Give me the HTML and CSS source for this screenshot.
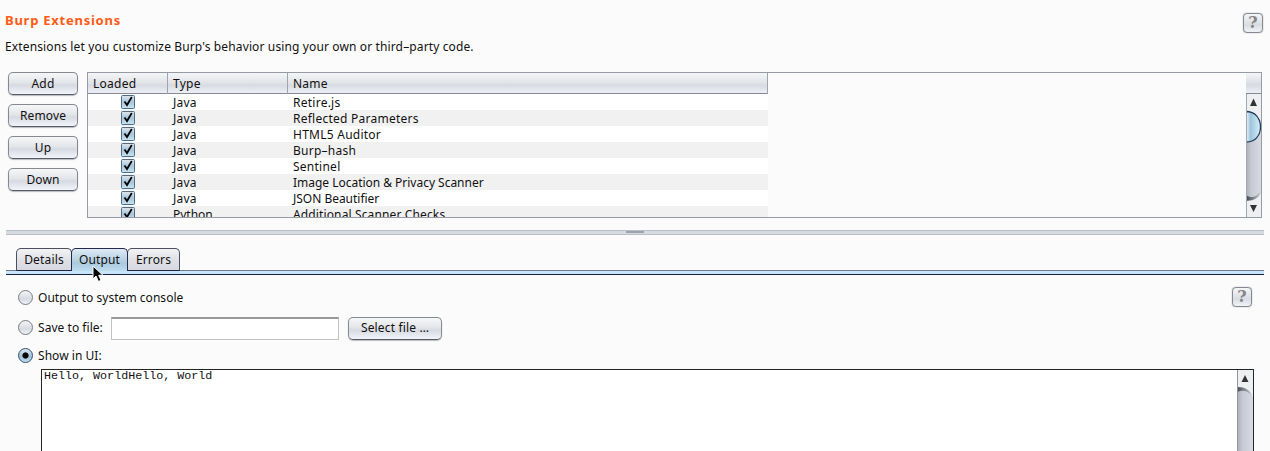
FILE: index.html
```html
<!DOCTYPE html>
<html lang="en">
<head>
<meta charset="utf-8">
<title>Burp Extensions</title>
<link rel="stylesheet" href="styles.css">
</head>
<body>
<div class="window">
  <header class="heading">
    <div>
      <h1 class="title">Burp Extensions</h1>
      <p class="intro">Extensions let you customize Burp's behavior using your own or third–party code.</p>
    </div>
    <button class="help">?</button>
  </header>
  <section class="extensions">
    <div class="actions">
      <button class="btn">Add</button>
      <button class="btn">Remove</button>
      <button class="btn">Up</button>
      <button class="btn">Down</button>
    </div>
    <div class="table-frame">
      <div class="table">
        <div class="row head"><span>Loaded</span><span>Type</span><span>Name</span></div>
        <div class="row"><span class="check"><svg width="14" height="14"><use href="#check"/></svg></span><span>Java</span><span>Retire.js</span></div>
        <div class="row"><span class="check"><svg width="14" height="14"><use href="#check"/></svg></span><span>Java</span><span>Reflected Parameters</span></div>
        <div class="row"><span class="check"><svg width="14" height="14"><use href="#check"/></svg></span><span>Java</span><span>HTML5 Auditor</span></div>
        <div class="row"><span class="check"><svg width="14" height="14"><use href="#check"/></svg></span><span>Java</span><span>Burp–hash</span></div>
        <div class="row"><span class="check"><svg width="14" height="14"><use href="#check"/></svg></span><span>Java</span><span>Sentinel</span></div>
        <div class="row"><span class="check"><svg width="14" height="14"><use href="#check"/></svg></span><span>Java</span><span class="tight">Image Location &amp; Privacy Scanner</span></div>
        <div class="row"><span class="check"><svg width="14" height="14"><use href="#check"/></svg></span><span>Java</span><span class="tight">JSON Beautifier</span></div>
        <div class="row"><span class="check"><svg width="14" height="14"><use href="#check"/></svg></span><span class="tight">Python</span><span class="snug">Additional Scanner Checks</span></div>
      </div>
      <div class="scroll">
        <div class="corner"></div>
        <svg width="15" height="123" viewBox="0 0 15 123">
          <rect width="15" height="123" fill="url(#track)"/>
          <path d="M0 0H15V30C12 22 7 18 0 17Z" fill="#edeff1"/>
          <path d="M0 17.500C9 17.500 14.500 24 14.500 33S9 48 0 48Z" fill="url(#thumb)" stroke="#203c5c" stroke-width="1.300"/>
          <path d="M0 101C5 105 11 103 15 97V100C12 104 8 107 0 107Z" fill="url(#shade)"/>
          <path d="M0 107C8 107 13 104 15 98V123H0Z" fill="#edeff1"/>
          <path d="M4 12L7.500 4.500L11 12ZM4 111H11L7.500 118Z" fill="#333"/>
          <path d="M.5 0V123" stroke="#a2a7b0"/>
        </svg>
      </div>
    </div>
  </section>
  <div class="divider"><i></i></div>
  <nav class="tabs">
    <button class="tab">Details</button>
    <button class="tab active">Output<svg class="cursor" width="13" height="19" viewBox="0 0 13 19"><path d="M1 1V14L4 11L6.500 16.500L9 15.300L6.700 10.300H11Z" fill="#080808" stroke="#fff"/></svg></button>
    <button class="tab">Errors</button>
  </nav>
  <div class="tab-line"></div>
  <main class="output">
    <div class="option first"><i class="radio"></i><span>Output to system console</span><button class="help small">?</button></div>
    <div class="option file"><i class="radio"></i><span class="save">Save to file:</span><input class="path" type="text"><button class="btn select">Select file …</button></div>
    <div class="option show"><i class="radio on"></i><span>Show in UI:</span></div>
    <div class="console">
      <pre class="log">Hello, WorldHello, World</pre>
      <svg width="16" height="82" viewBox="0 0 16 82">
        <rect width="16" height="82" fill="url(#track)"/>
        <path d="M0 0H16V27C13 20 9 17 0 17Z" fill="#edeff1"/>
        <path d="M0 17C8 17 13 20 15 26C10 20 6 20 0 22Z" fill="url(#shade)"/>
        <path d="M4.500 12L8 5L11.500 12Z" fill="#333"/>
        <path d="M.5 0V82" stroke="#92969e"/>
      </svg>
    </div>
  </main>
</div>
<svg class="defs" width="0" height="0">
  <defs>
    <linearGradient id="blue" x2="0" y2="1"><stop stop-color="#dbe7f1"/><stop offset=".5" stop-color="#a9c5da"/><stop offset="1" stop-color="#cbe3f3"/></linearGradient>
    <linearGradient id="track"><stop stop-color="#a9adb8"/><stop offset=".35" stop-color="#c7cad3"/><stop offset="1" stop-color="#d7dae1"/></linearGradient>
    <linearGradient id="shade"><stop stop-color="#44474d"/><stop offset=".45" stop-color="#7c8088"/><stop offset="1" stop-color="#c7cad3"/></linearGradient>
    <linearGradient id="thumb"><stop stop-color="#d5e5f0"/><stop offset=".12" stop-color="#d5e5f0"/><stop offset=".3" stop-color="#9dc3dd"/><stop offset="1" stop-color="#d8effb"/></linearGradient>
    <symbol id="check" viewBox="0 0 14 14"><rect x=".5" y=".5" width="13" height="13" rx="1" fill="url(#blue)" stroke="#4f6b85"/><path d="M3.500 6.500L6 10L10.800 2" fill="none" stroke="#050505" stroke-width="1.800"/></symbol>
  </defs>
</svg>
</body>
</html>
```
FILE: styles.css
```css
* { box-sizing: border-box; }
body { margin: 0; background: #fbfbfb; }
.window { width: 1270px; height: 451px; overflow: hidden; color: #111; font: 12px/16px "Noto Sans", sans-serif; letter-spacing: .25px; }
button { font: inherit; letter-spacing: .15px; color: inherit; padding: 0; white-space: nowrap; }
.heading { display: flex; justify-content: space-between; height: 72px; padding: 12px 7px 0 5px; }
.title { margin: 0; font-size: 13px; line-height: 17px; letter-spacing: .75px; color: #ff5a14; }
.intro { margin: 10px 0 0; letter-spacing: .13px; }
.help { width: 20px; height: 20px; margin-top: 1px; border: 1px solid #85898f; border-radius: 4px; background: linear-gradient(#f5f6f8, #d9dce2 60%, #f0f3f7); font: bold 16px/18px "DejaVu Serif", serif; color: #858585; box-shadow: 0 0 1px #666; }
.extensions { display: flex; gap: 9px; padding: 0 8px 0 8px; height: 146px; }
.actions { display: grid; grid-auto-rows: 23px; row-gap: 9px; width: 70px; }
.btn { border: 1px solid #85898f; border-bottom-color: #555a64; border-radius: 5px; background: linear-gradient(#f6f7f8, #e3e5e9 45%, #d7dae1 58%, #f1f5fb); box-shadow: 0 1px 1px #bbb; }
.actions .btn { padding-top: 1px; }
.table-frame { display: flex; justify-content: space-between; flex: 1; height: 146px; border: 1px solid #959aa5; overflow: hidden; }
.table { width: 680px; }
.row { display: grid; grid-template-columns: 80px 120px 480px; height: 16px; line-height: 18px; background: #fff; }
.row:nth-child(odd):not(.head) { background: #f1f1f1; }
.row span { padding-left: 5px; white-space: nowrap; }
.row .check { padding: 1px 0 0 33px; line-height: 0; }
.row .tight { letter-spacing: -.02px; }
.row .snug { letter-spacing: .13px; }
.row.head { height: 21px; line-height: 21px; border-bottom: 1px solid #848994; background: linear-gradient(#f4f5f7, #e1e3e8 50%, #d7dae1 60%, #eceff5); }
.head span { border-right: 1px solid #a0a4ad; }
.scroll { width: 15px; }
.corner { height: 21px; border-bottom: 1px solid #848994; background: linear-gradient(#f4f5f7, #d7dae1 60%, #eceff5); }
svg { display: block; }
.divider { display: flex; justify-content: center; margin: 12px 6px 0; height: 5px; border: solid #b9bfca; border-width: 1px 0; background: #d6dbe0; }
.divider i { width: 18px; height: 2px; background: #9ca1ab; }
.tabs { display: flex; height: 23px; margin: 13px 0 0 16px; }
.tab { height: 23px; border: 1px solid #4d4e60; border-bottom-color: #242440; border-radius: 5px 5px 0 0; background: linear-gradient(#f2f3f5, #dfe1e6 50%, #d6d9e0); }
.tab:first-child { width: 56px; }
.tab.active { position: relative; width: 57px; margin: 0 -1px; border-color: #25294a; border-bottom: 0; background: linear-gradient(#deebf5, #abc9dd 65%, #bdddf0); z-index: 1; }
.tab:last-child { width: 53px; }
.cursor { position: absolute; left: 20px; top: 16px; }
.tab-line { height: 5px; margin: -1px 6px 0; border-top: 1px solid #727b8e; border-bottom: 1px solid #16213e; background: #c6e4fa; }
.output { padding: 0 16px 0 18px; letter-spacing: .04px; }
.option { display: flex; align-items: center; height: 24px; }
.first { margin-top: 11px; }
.first .help { margin: -2px 2px 0 auto; }
.file { margin-top: 6px; }
.save { width: 66px; }
.show { margin-top: 4px; }
.radio { width: 15px; height: 15px; margin: -1px 5px 0 0; border: 1px solid #777b83; border-radius: 50%; background: linear-gradient(#f4f5f7, #d7dae1 60%, #eff2f7); }
.radio.on { border-color: #35506b; background: radial-gradient(circle, #080808 0 2.7px, transparent 3.5px), linear-gradient(#dce8f1, #9fc0d8 60%, #c3dff1); }
.path { width: 228px; height: 23px; margin: 0 9px 0 7px; padding: 2px; border: 1px solid #c2c2c2; border-top: 2px solid #999; background: #fff; }
.select { width: 94px; height: 23px; }
.console { display: flex; justify-content: space-between; margin: 1px 0 0 23px; height: 100px; border: 1px solid #242424; background: #fff; }
.log { margin: 0; padding: 0 2px; font: 11.7px/13px "Liberation Mono", monospace; letter-spacing: 0; }
.defs { position: absolute; }
```
